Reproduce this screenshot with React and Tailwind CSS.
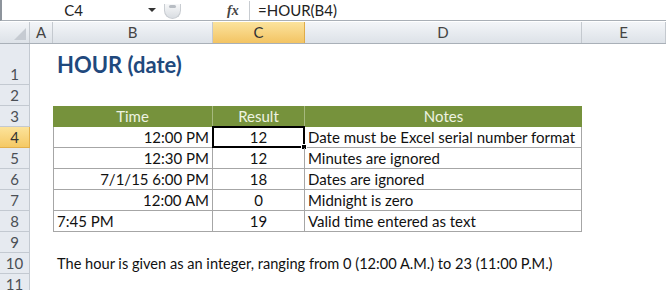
import React from "react";

const rows = [
  { time: "12:00 PM", result: "12", note: "Date must be Excel serial number format" },
  { time: "12:30 PM", result: "12", note: "Minutes are ignored" },
  { time: "7/1/15 6:00 PM", result: "18", note: "Dates are ignored" },
  { time: "12:00 AM", result: "0", note: "Midnight is zero" },
  { time: "7:45 PM", result: "19", note: "Valid time entered as text", left: true },
];

function RowHead({ n, active, tall }) {
  return (
    <div
      className={
        "w-[30px] shrink-0 border-r border-b flex justify-center text-[15px] leading-none " +
        (tall ? "items-end pb-[2px] " : "items-center ") +
        (active
          ? "bg-gradient-to-b from-[#fce39a] to-[#f5c964] border-[#e3b04c] text-[#333]"
          : "bg-[#e6eaf0] border-[#c3c9d1] text-[#4b4f55]")
      }
    >
      {n}
    </div>
  );
}

function ColHead({ label, w, active }) {
  return (
    <div
      className={
        "h-full shrink-0 border-r flex items-center justify-center text-[15px] " +
        w +
        (active
          ? " bg-gradient-to-b from-[#fbe39d] to-[#f3c462] border-[#e0ac48] text-[#333]"
          : " bg-gradient-to-b from-[#f3f5f8] to-[#dde2e8] border-[#c4c9cf] text-[#444]")
      }
    >
      {label}
    </div>
  );
}

export default function App() {
  return (
    <div className="w-[666px] h-[290px] bg-white overflow-hidden font-['Lato',sans-serif] text-black">
      {/* formula bar */}
      <div className="h-[21px] flex items-center border-l-2 border-[#8d949c] border-b border-b-[#a9afb6] bg-white">
        <div className="w-[143px] text-center text-[15px] text-[#222]">C4</div>
        <div className="w-0 h-0 border-l-[4px] border-r-[4px] border-t-[4px] border-l-transparent border-r-transparent border-t-[#333] ml-[3px]" />
        <div className="ml-[8px] self-end w-[17px] h-[15px] rounded-b-full border border-t-0 border-[#c9cdd2] bg-gradient-to-b from-[#f7f8f9] to-[#d9dde2] flex items-start justify-center overflow-hidden mb-[1px]">
          <div className="mt-[1px] w-[7px] h-[3px] rounded-full bg-[#b8bdc3]" />
        </div>
        <div className="ml-[46px] w-[20px] text-[14px] italic font-['Liberation_Serif',serif] font-bold text-[#444]">fx</div>
        <div className="w-px h-[19px] bg-[#c8ccd1] ml-[2px]" />
        <div className="pl-[8px] text-[15px] text-[#222]">=HOUR(B4)</div>
      </div>

      {/* column headers */}
      <div className="h-[22px] flex border-b border-[#a9b0b8] mt-px">
        <div className="w-[30px] h-full shrink-0 border-r border-[#c4c9cf] bg-gradient-to-b from-[#f3f5f8] to-[#dde2e8] flex items-end justify-end p-[3px]">
          <svg width="12" height="12" viewBox="0 0 12 12">
            <polygon points="12,0 12,12 0,12" fill="#c6cbd2" />
          </svg>
        </div>
        <ColHead label="A" w="w-[23px]" />
        <ColHead label="B" w="w-[160px]" />
        <ColHead label="C" w="w-[92px]" active />
        <ColHead label="D" w="w-[277px]" />
        <ColHead label="E" w="flex-1" />
      </div>

      {/* row 1 */}
      <div className="h-[41px] flex">
        <RowHead n="1" tall />
        <div className="pl-[27px] pt-[10px] text-[22px] font-bold text-[#1f497d] leading-none">HOUR (date)</div>
      </div>

      {/* row 2 */}
      <div className="h-[21px] flex">
        <RowHead n="2" />
      </div>

      {/* row 3 header */}
      <div className="h-[21px] flex">
        <RowHead n="3" />
        <div className="w-[23px] shrink-0" />
        <div className="flex bg-[#76923c] text-[#eef3e2] text-[15px] border-b border-[#76923c]">
          <div className="w-[160px] border-r border-[#a6b97e] flex items-center justify-center">Time</div>
          <div className="w-[92px] border-r border-[#a6b97e] flex items-center justify-center">Result</div>
          <div className="w-[277px] flex items-center justify-center">Notes</div>
        </div>
      </div>

      {rows.map((r, i) => (
        <div key={i} className="h-[21px] flex">
          <RowHead n={String(i + 4)} active={i === 0} />
          <div className="w-[23px] shrink-0" />
          <div className="flex text-[15px] text-[#111]">
            <div
              className={
                "w-[160px] border-l border-r border-b border-[#a6a6a6] flex items-center px-[3px] " +
                (r.left ? "justify-start" : "justify-end")
              }
            >
              {r.time}
            </div>
            <div className="relative w-[92px] border-r border-b border-[#a6a6a6] flex items-center justify-center">
              {r.result}
              {i === 0 && (
                <div className="absolute -left-[1px] -top-[1px] -right-[1px] -bottom-[1px] border-2 border-black">
                  <div className="absolute -right-[4px] -bottom-[4px] w-[6px] h-[6px] bg-black border border-white" />
                </div>
              )}
            </div>
            <div className="w-[277px] border-r border-b border-[#a6a6a6] flex items-center pl-[3px]">{r.note}</div>
          </div>
        </div>
      ))}

      {/* row 9 */}
      <div className="h-[21px] flex">
        <RowHead n="9" />
      </div>

      {/* row 10 */}
      <div className="h-[21px] flex">
        <RowHead n="10" />
        <div className="pl-[27px] flex items-center text-[14.6px] text-[#111]">
          The hour is given as an integer, ranging from 0 (12:00 A.M.) to 23 (11:00 P.M.)
        </div>
      </div>

      {/* row 11 */}
      <div className="h-[21px] flex">
        <RowHead n="11" />
      </div>
    </div>
  );
}
